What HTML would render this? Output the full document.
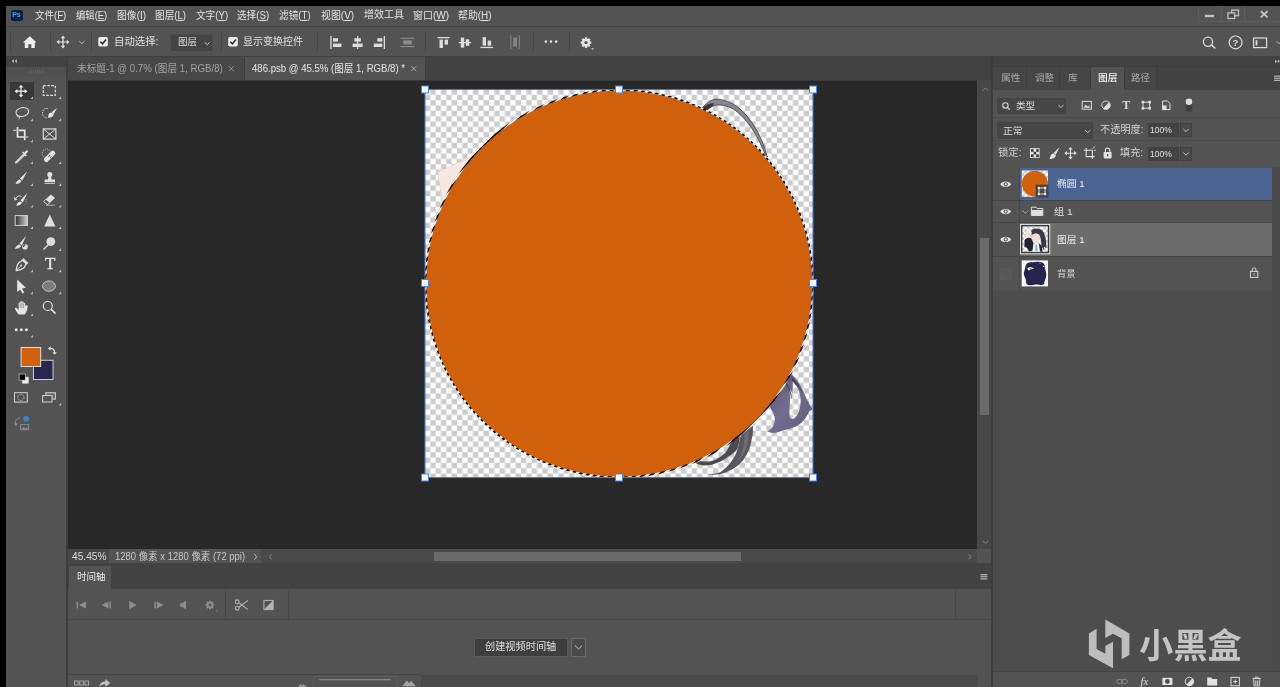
<!DOCTYPE html>
<html lang="zh-CN">
<head>
<meta charset="utf-8">
<title>Photoshop</title>
<style>
*{margin:0;padding:0;box-sizing:border-box}
html,body{width:1280px;height:687px;overflow:hidden;background:#000}
body{position:relative;font-family:"Liberation Sans","Noto Sans CJK SC",sans-serif;font-size:10.5px;color:#d6d6d6;line-height:1}
.abs{position:absolute}
.t{position:absolute;white-space:nowrap}
svg{position:absolute;overflow:visible}
u{text-decoration:underline;text-decoration-thickness:0.8px;text-underline-offset:1px}
/* ===== frames ===== */
#menubar{left:6px;top:6px;width:1274px;height:20px;background:#535353}
#menuline{left:6px;top:26px;width:1274px;height:1px;background:#444}
#optbar{left:6px;top:27px;width:1274px;height:29px;background:#535353}
#optline{left:6px;top:56px;width:1274px;height:1px;background:#3f3f3f}
#toolhead{left:6px;top:57px;width:60px;height:10px;background:#424242}
#toolgrip{left:6px;top:67px;width:60px;height:9px;background:#505050}
#tools{left:6px;top:76px;width:60px;height:611px;background:#535353}
#toolsep{left:66px;top:57px;width:2px;height:630px;background:#3d3d3d}
#tabbar{left:68px;top:57px;width:924px;height:23px;background:#424242}
#canvas{left:68px;top:80px;width:909px;height:469px;background:#282828;border-top:1px solid #363636}
#vscroll{left:977px;top:80px;width:14px;height:469px;background:#474747}
#vthumb{left:980px;top:238px;width:9px;height:177px;background:#6a6a6a}
#status{left:68px;top:549px;width:923px;height:14px;background:#4a4a4a}
#tlhead{left:68px;top:563px;width:923px;height:26px;background:#424242}
#tlctrl{left:68px;top:589px;width:923px;height:30px;background:#535353}
#tlbody{left:68px;top:619px;width:923px;height:56px;background:#535353;border-top:1px solid #474747}
#tlfoot{left:68px;top:675px;width:923px;height:12px;background:#535353}
#midsep{left:991px;top:57px;width:2px;height:630px;background:#3d3d3d}
#rhead{left:993px;top:57px;width:287px;height:10px;background:#424242}
#rtabs{left:993px;top:67px;width:287px;height:23px;background:#424242}
#rpanel{left:993px;top:90px;width:287px;height:77px;background:#535353}
#rlist{left:993px;top:167px;width:287px;height:505px;background:#4d4d4d}
#rfoot{left:993px;top:672px;width:287px;height:15px;background:#535353}
</style>
</head>
<body>
<div id="root" style="position:absolute;left:0;top:0;width:1280px;height:687px;will-change:transform">
<div class="abs" id="menubar"></div>
<div class="abs" id="menuline"></div>
<div class="abs" id="optbar"></div>
<div class="abs" id="optline"></div>
<div class="abs" id="toolhead"></div>
<div class="abs" id="toolgrip"></div>
<div class="abs" id="tools"></div>
<div class="abs" id="toolsep"></div>
<div class="abs" id="tabbar"></div>
<div class="abs" id="canvas"></div>
<div class="abs" id="vscroll"></div>
<div class="abs" id="vthumb"></div>
<div class="abs" id="status"></div>
<div class="abs" id="tlhead"></div>
<div class="abs" id="tlctrl"></div>
<div class="abs" id="tlbody"></div>
<div class="abs" id="tlfoot"></div>
<div class="abs" id="midsep"></div>
<div class="abs" id="rhead"></div>
<div class="abs" id="rtabs"></div>
<div class="abs" id="rpanel"></div>
<div class="abs" id="rlist"></div>
<div class="abs" id="rfoot"></div>
<!-- Ps app icon -->
<div class="abs" style="left:10.5px;top:10px;width:12px;height:11px;background:#0a2240;border-radius:2.2px"></div>
<span class="t" style="left:12.2px;top:11.3px;font-size:7px;line-height:8px;font-weight:bold;color:#31a8ff;letter-spacing:-0.2px">Ps</span>
<!-- window controls -->
<div class="abs" style="left:1198px;top:6px;width:82px;height:16px;border-left:1px solid #5e5e5e;border-bottom:1px solid #5e5e5e"></div>
<div class="abs" style="left:1221px;top:6px;width:1px;height:15px;background:#5e5e5e"></div>
<div class="abs" style="left:1244px;top:6px;width:1px;height:15px;background:#5e5e5e"></div>
<svg width="82" height="16" viewBox="1198 6 82 16" style="left:1198px;top:6px">
<rect x="1205" y="14.8" width="9" height="2.4" fill="#c4c4c4"/>
<rect x="1231.7" y="10.1" width="6.8" height="5.6" fill="none" stroke="#c0c0c0" stroke-width="1.3"/>
<rect x="1227.9" y="12.9" width="6.8" height="5.6" fill="#535353" stroke="#c0c0c0" stroke-width="1.3"/>
<rect x="1229.8" y="14.8" width="3" height="1.8" fill="#3c3c3c"/>
<path d="M1260.8 11.2 L1267.6 17.4 M1267.6 11.2 L1260.8 17.4" stroke="#c8c8c8" stroke-width="1.7" fill="none"/>
</svg>
<svg width="1274" height="29" viewBox="6 27 1274 29" style="left:6px;top:27px">
<!-- grip -->
<g fill="#474747"><rect x="10" y="32" width="1" height="20"/></g>
<!-- home -->
<path d="M29.8 36.3 L23 42.6 L24.8 42.6 L24.8 48 L28.3 48 L28.3 44.2 L31.3 44.2 L31.3 48 L34.8 48 L34.8 42.6 L36.6 42.6 Z" fill="#f0f0f0"/>
<!-- separators -->
<g fill="#464646"><rect x="50" y="31.5" width="1" height="20"/><rect x="91" y="31.5" width="1" height="20"/><rect x="221" y="31.5" width="1" height="20"/><rect x="317" y="31.5" width="1" height="20"/><rect x="425" y="31.5" width="1" height="20"/><rect x="533" y="31.5" width="1" height="20"/><rect x="569" y="31.5" width="1" height="20"/></g>
<!-- move tool -->
<g stroke="#e4e4e4" stroke-width="1.2" fill="#e4e4e4">
<path d="M63 37 V47 M58 42 H68" fill="none"/>
<path d="M63 35.6 L65.2 38.2 H60.8 Z M63 48.4 L65.2 45.8 H60.8 Z M56.6 42 L59.2 39.8 V44.2 Z M69.4 42 L66.8 39.8 V44.2 Z" stroke="none"/>
</g>
<path d="M79.3 41.3 L81.8 43.7 L84.3 41.3" stroke="#b8b8b8" stroke-width="1" fill="none"/>
<!-- checkbox 1 -->
<rect x="98.3" y="37" width="9.6" height="9.6" rx="1.8" fill="#ececec"/>
<path d="M100.4 41.8 L102.5 43.9 L106 39.6" stroke="#2a2a2a" stroke-width="1.6" fill="none"/>
<!-- dropdown -->
<rect x="170.7" y="34.5" width="41.8" height="16.5" rx="1" fill="#444"/>
<path d="M204.6 42.2 L207.2 44.7 L209.8 42.2" stroke="#c8c8c8" stroke-width="1" fill="none"/>
<!-- checkbox 2 -->
<rect x="228.2" y="37" width="9.6" height="9.6" rx="1.8" fill="#ececec"/>
<path d="M230.3 41.8 L232.4 43.9 L235.9 39.6" stroke="#2a2a2a" stroke-width="1.6" fill="none"/>
<!-- align left -->
<g fill="#dcdcdc">
<rect x="330.3" y="36" width="1.3" height="13"/><rect x="333" y="38.2" width="5" height="3.4"/><rect x="333" y="43.6" width="8.5" height="3.4"/>
<!-- align center h -->
<rect x="357" y="36" width="1.2" height="13"/><rect x="354.3" y="38.2" width="6.6" height="3.4"/><rect x="352.6" y="43.6" width="10" height="3.4"/>
<!-- align right -->
<rect x="383.7" y="36" width="1.3" height="13"/><rect x="377.3" y="38.2" width="5" height="3.4"/><rect x="373.8" y="43.6" width="8.5" height="3.4"/>
</g>
<!-- distribute (dim) -->
<g fill="#8c8c8c"><rect x="400.5" y="37.7" width="14" height="1.1"/><rect x="400.5" y="46" width="14" height="1.1"/><rect x="403.2" y="40.4" width="8.6" height="4"/></g>
<!-- align top -->
<g fill="#dcdcdc">
<rect x="437.5" y="37" width="12" height="1.3"/><rect x="439.5" y="39.6" width="3.4" height="8.4"/><rect x="444.6" y="39.6" width="3.4" height="5"/>
<!-- align middle v -->
<rect x="458.7" y="42" width="12.4" height="1.2"/><rect x="460.8" y="37.6" width="3.4" height="10"/><rect x="465.8" y="39.3" width="3.4" height="6.6"/>
<!-- align bottom -->
<rect x="480.5" y="46.8" width="12.5" height="1.3"/><rect x="482.6" y="37.2" width="3.4" height="8.4"/><rect x="487.7" y="40.6" width="3.4" height="5"/>
</g>
<!-- distribute v (dim) -->
<g fill="#858585"><rect x="510.3" y="35.4" width="1.1" height="13.4"/><rect x="518.7" y="35.4" width="1.1" height="13.4"/><rect x="513.2" y="37.6" width="3.8" height="9"/></g>
<!-- dots -->
<g fill="#dedede"><circle cx="545.9" cy="41.6" r="1.3"/><circle cx="551" cy="41.6" r="1.3"/><circle cx="556.1" cy="41.6" r="1.3"/></g>
<!-- gear -->
<g transform="translate(586 42.6)">
<g fill="#e6e6e6">
<circle r="3.9"/>
<g id="tooth"><rect x="-1.15" y="-5.3" width="2.3" height="10.6"/></g>
<rect x="-1.15" y="-5.3" width="2.3" height="10.6" transform="rotate(45)"/>
<rect x="-1.15" y="-5.3" width="2.3" height="10.6" transform="rotate(90)"/>
<rect x="-1.15" y="-5.3" width="2.3" height="10.6" transform="rotate(135)"/>
</g>
<circle r="1.7" fill="#535353"/>
</g>
<path d="M591.2 48.3 H594 L592.6 50 Z" fill="#d0d0d0"/>
<!-- right icons -->
<circle cx="1208" cy="41.7" r="4.6" fill="none" stroke="#dcdcdc" stroke-width="1.3"/>
<path d="M1211.4 45 L1214.8 48" stroke="#dcdcdc" stroke-width="1.6" stroke-linecap="round"/>
<circle cx="1235.6" cy="42.4" r="6.4" fill="none" stroke="#dcdcdc" stroke-width="1.2"/>
<rect x="1253.6" y="38" width="13" height="9.6" fill="none" stroke="#dcdcdc" stroke-width="1.2"/>
<rect x="1255.6" y="40.2" width="1.8" height="5.2" fill="#dcdcdc"/>
<path d="M1276.5 41.3 L1279 43.6 L1281.5 41.3" stroke="#b8b8b8" stroke-width="1" fill="none"/>
</svg>
<span class="t" style="left:1232.6px;top:37.2px;font-size:9.5px;line-height:11px;font-weight:bold;color:#dcdcdc">?</span>
<!-- doc tabs -->
<div class="abs" style="left:68px;top:57px;width:176px;height:23px;background:#474747"></div>
<div class="abs" style="left:244px;top:57px;width:181px;height:23px;background:#535353"></div>
<div class="abs" style="left:243.5px;top:57px;width:1px;height:23px;background:#3c3c3c"></div>
<div class="abs" style="left:425px;top:57px;width:1px;height:23px;background:#3c3c3c"></div>
<svg width="924" height="24" viewBox="68 57 924 24" style="left:68px;top:57px">
<path d="M228.8 66.2 L233.8 71.2 M233.8 66.2 L228.8 71.2" stroke="#9a9a9a" stroke-width="0.9" fill="none"/>
<path d="M411.3 66.2 L416.3 71.2 M416.3 66.2 L411.3 71.2" stroke="#b4b4b4" stroke-width="0.9" fill="none"/>
</svg>
<!-- tool panel header chevrons -->
<svg width="60" height="10" viewBox="6 57 60 10" style="left:6px;top:57px">
<path d="M13.8 59.2 V63 L11.8 61.1 Z M16.8 59.2 V63 L14.8 61.1 Z" fill="#cfcfcf"/>
</svg>
<svg width="60" height="9" viewBox="6 67 60 9" style="left:6px;top:67px">
<g fill="#616161"><rect x="29" y="70" width="1" height="3.5"/><rect x="31" y="70" width="1" height="3.5"/><rect x="33" y="70" width="1" height="3.5"/><rect x="35" y="70" width="1" height="3.5"/><rect x="37" y="70" width="1" height="3.5"/><rect x="39" y="70" width="1" height="3.5"/><rect x="41" y="70" width="1" height="3.5"/><rect x="43" y="70" width="1" height="3.5"/></g>
</svg>
<div class="abs" style="left:9.6px;top:81.6px;width:24.4px;height:18.3px;background:#383838"></div>
<svg width="60" height="611" viewBox="6 76 60 611" style="left:6px;top:76px">
<defs>
<linearGradient id="gr1" x1="0" y1="0" x2="1" y2="0"><stop offset="0" stop-color="#2e2e2e"/><stop offset="1" stop-color="#d0d0d0"/></linearGradient>
<path id="tri" d="M0 2.6 H2.6 V0 Z" fill="#bdbdbd"/>
</defs>
<!-- corner triangles -->
<use href="#tri" x="30.4" y="96.4"/><use href="#tri" x="58.5" y="96.4"/>
<use href="#tri" x="30.4" y="118.6"/><use href="#tri" x="58.5" y="118.6"/>
<use href="#tri" x="30.4" y="139.6"/>
<use href="#tri" x="30.4" y="161.3"/><use href="#tri" x="58.5" y="161.3"/>
<use href="#tri" x="30.4" y="183.3"/><use href="#tri" x="58.5" y="183.3"/>
<use href="#tri" x="30.4" y="205"/><use href="#tri" x="58.5" y="205"/>
<use href="#tri" x="30.4" y="226.3"/><use href="#tri" x="58.5" y="226.3"/>
<use href="#tri" x="58.5" y="248.3"/>
<use href="#tri" x="30.4" y="269.6"/><use href="#tri" x="58.5" y="269.6"/>
<use href="#tri" x="30.4" y="291.6"/><use href="#tri" x="58.5" y="291.6"/>
<use href="#tri" x="30.4" y="313.4"/>
<use href="#tri" x="30.4" y="335"/>
<use href="#tri" x="58.5" y="403"/>
<!-- move -->
<g fill="#f0f0f0"><path d="M21 86.6 V95.8 M16.4 91.2 H25.6" stroke="#f0f0f0" stroke-width="1.2"/>
<path d="M21 84.8 L23.3 87.6 H18.7 Z M21 97.6 L23.3 94.8 H18.7 Z M14.6 91.2 L17.4 88.9 V93.5 Z M27.4 91.2 L24.6 88.9 V93.5 Z"/></g>
<!-- marquee -->
<rect x="43.3" y="85.7" width="12" height="9.6" fill="none" stroke="#e0e0e0" stroke-width="1.2" stroke-dasharray="2.6 1.4"/>
<!-- lasso -->
<ellipse cx="22.3" cy="112" rx="6.4" ry="4.4" fill="none" stroke="#dadada" stroke-width="1.1" transform="rotate(-12 22.3 112)"/>
<path d="M17.6 114.6 C16.6 116 17.6 117.4 19 116.6 C19.8 117.4 19.4 118.6 18.8 119.4" fill="none" stroke="#dadada" stroke-width="1"/>
<!-- quick select -->
<path d="M47.6 108.4 C43.6 107.8 42.2 111 42.6 114 C43 117 45.4 118.6 47.6 117.6" fill="none" stroke="#d8d8d8" stroke-width="1" stroke-dasharray="1.3 1"/>
<path d="M56.9 107.9 L51.6 112.2 L53.6 114.2 Z" fill="#ececec"/>
<path d="M51.2 112.4 C48.8 112.8 48.2 115 48 117.8 C51.4 117.8 53.6 116.6 53.8 114.6 Z" fill="#ececec"/>
<!-- crop -->
<path d="M17.5 127 V137 H24.4 M18.9 130.3 H24.7 V140.2" fill="none" stroke="#e8e8e8" stroke-width="1.7"/><path d="M25.6 137 H28.5 M13.1 130.3 H16.4" stroke="#dcdcdc" stroke-width="1.1"/>
<!-- frame -->
<rect x="43.3" y="128.9" width="12.6" height="10.2" fill="none" stroke="#dcdcdc" stroke-width="1.2"/>
<path d="M43.3 128.9 L55.9 139.1 M55.9 128.9 L43.3 139.1" stroke="#dcdcdc" stroke-width="1"/>
<!-- eyedropper -->
<path d="M23.8 154 L16.4 161.4 C15.6 162.2 15 162.8 15.6 163 C16.4 163.2 17 162.4 17.6 161.8 L24.8 154.8" fill="none" stroke="#dcdcdc" stroke-width="1.1"/>
<path d="M22 152.6 L25.8 156.4 L26.8 155.4 L25.6 154.2 L27.8 152 C28.6 151.2 27.2 149.6 26.2 150.6 L24.2 152.8 L23 151.6 Z" fill="#e6e6e6"/>
<!-- healing -->
<circle cx="46.6" cy="153.4" r="4.4" fill="none" stroke="#cfcfcf" stroke-width="0.9" stroke-dasharray="1.3 1"/>
<path d="M46.4 159.6 L52.8 153.2" stroke="#e4e4e4" stroke-width="5" stroke-linecap="round"/>
<g fill="#535353"><circle cx="48.8" cy="156.2" r="0.55"/><circle cx="50.4" cy="157.6" r="0.55"/><circle cx="49.6" cy="155.4" r="0.55"/><circle cx="51.2" cy="156.8" r="0.55"/></g>
<!-- brush -->
<path d="M27.2 171.5 L19.9 178.5 L22.2 180.6 Z" fill="#e6e6e6"/>
<path d="M19.8 179.6 C17.6 179.8 16.4 181.6 15.6 184 C18.4 184 20.6 183 21.4 181 Z" fill="#e6e6e6"/>
<!-- stamp -->
<circle cx="49.8" cy="174.6" r="2.5" fill="#e2e2e2"/>
<path d="M48.6 176 H51 L51.6 179.4 H55 V182 H44.6 V179.4 H48 Z" fill="#e2e2e2"/>
<rect x="44.6" y="182.8" width="10.4" height="1.1" fill="#cfcfcf"/>
<!-- history brush -->
<path d="M27.4 193.1 L20.5 200.3 L22.8 202.4 Z" fill="#e4e4e4"/>
<path d="M20.4 201.4 C18.2 201.6 17 203.4 16.2 205.8 C19 205.8 21.2 204.8 22 202.8 Z" fill="#e4e4e4"/>
<path d="M15.8 198.4 C17 196 19.6 195.4 21.6 196.4" fill="none" stroke="#d6d6d6" stroke-width="1"/>
<path d="M14 196.8 L17.6 199.6 L14.4 200.4 Z" fill="#d6d6d6"/>
<path d="M26 199 C27 201.4 26.4 203.4 24.6 204.6" fill="none" stroke="#a8a8a8" stroke-width="0.8" stroke-dasharray="1 0.9"/>
<!-- eraser -->
<path d="M50.8 194.4 L55 198 L47.6 205 L43.4 201.6 Z" fill="#e2e2e2"/>
<path d="M45.8 199.2 L43.6 201.4 L47.4 204.6 L49.6 202.6 Z" fill="#535353" stroke="#e2e2e2" stroke-width="0.8"/>
<path d="M46 205.2 H55" stroke="#bdbdbd" stroke-width="0.9"/>
<!-- gradient -->
<rect x="15.2" y="215.6" width="12.2" height="9.8" fill="url(#gr1)" stroke="#d4d4d4" stroke-width="1"/>
<!-- sharpen triangle -->
<path d="M49.8 214.6 L55.4 226.4 H44.2 Z" fill="#e0e0e0"/>
<!-- mixer -->
<path d="M26.2 235.7 L19.5 243.5 L21.8 245.4 Z" fill="#e2e2e2"/>
<path d="M19.6 244.4 C17.4 244.8 15.8 246.4 14.8 248.8 C17.6 248.8 19.8 248 21 246 Z" fill="#e2e2e2"/>
<circle cx="25" cy="246.7" r="2.8" fill="#e2e2e2"/>
<path d="M23.2 247.6 A2 2 0 0 1 26 244.8 Z" fill="#535353"/>
<!-- dodge -->
<circle cx="50.8" cy="241.6" r="4.4" fill="#dedede"/>
<path d="M48 245 L43.4 249.4" stroke="#dedede" stroke-width="1.4"/>
<!-- pen -->
<path d="M23.4 259 L27.6 263 L25.2 265.4 C24.8 268 22 270 16.2 270.6 C16.6 265 18.8 262 21.2 261.4 Z" fill="none" stroke="#e0e0e0" stroke-width="1.2"/>
<path d="M16.6 270.2 L20.8 266" stroke="#e0e0e0" stroke-width="0.9"/><circle cx="21.2" cy="265.6" r="1" fill="#e0e0e0"/>
<path d="M22.4 259.8 L26.8 264" stroke="#e0e0e0" stroke-width="1.8"/>
<!-- ellipse shape -->
<ellipse cx="49" cy="286.1" rx="6.4" ry="5.2" fill="#7c7c7c" stroke="#c4c4c4" stroke-width="1"/>
<!-- path select arrow -->
<path d="M17.2 279.6 V291.9 L20.2 289.4 L22.4 293.6 L24.2 292.6 L22 288.6 L25.9 287.8 Z" fill="#e6e6e6"/>
<!-- hand -->
<path d="M18.6 314.6 C17 312.6 15.6 310 14.8 308.4 C15.6 307.4 16.8 307.8 17.6 309 L18.6 310.4 V303.4 C18.6 302.2 20.2 302.2 20.2 303.4 V301.8 C20.2 300.6 21.9 300.6 21.9 301.8 V302.4 C21.9 301.2 23.6 301.2 23.6 302.4 V303.6 C23.6 302.6 25.2 302.6 25.2 303.6 V306 C26.4 304.8 27.8 305.2 27.6 306.4 C27.4 309.6 26.4 312.6 24.6 314.6 Z" fill="#e4e4e4"/>
<g stroke="#535353" stroke-width="0.5"><path d="M20.2 303.4 V308 M21.9 302.4 V308 M23.6 303.6 V308"/></g>
<!-- zoom -->
<circle cx="47.8" cy="306" r="4.5" fill="none" stroke="#e0e0e0" stroke-width="1.2"/>
<path d="M51.2 309.4 L55.6 313.6" stroke="#e0e0e0" stroke-width="1.5"/>
<!-- dots -->
<g fill="#e4e4e4"><circle cx="16.2" cy="329.8" r="1.5"/><circle cx="21.3" cy="329.8" r="1.5"/><circle cx="26.4" cy="329.8" r="1.5"/></g>
<!-- swatches -->
<rect x="33.4" y="360.3" width="19.6" height="19.2" fill="#27264f" stroke="#cfcfcf" stroke-width="1"/>
<rect x="21.1" y="347.5" width="19.6" height="19" fill="#d1610c" stroke="#e0e0e0" stroke-width="1"/>
<path d="M49.4 348.4 C52.6 348 54.6 349.8 54.6 352.4" fill="none" stroke="#e0e0e0" stroke-width="1.3"/>
<path d="M48 348.4 L50.6 346.2 V350.6 Z M54.6 354.8 L52.4 352.2 H56.8 Z" fill="#e0e0e0"/>
<rect x="22.3" y="377.2" width="6" height="6" fill="#f2f2f2" stroke="#d0d0d0" stroke-width="0.7"/>
<rect x="19.1" y="374" width="6.2" height="6.2" fill="#000" stroke="#d0d0d0" stroke-width="0.7"/>
<!-- quick mask -->
<rect x="14.5" y="392.7" width="12.8" height="9.4" fill="none" stroke="#d4d4d4" stroke-width="1"/>
<circle cx="20.9" cy="397.4" r="3.1" fill="none" stroke="#cfcfcf" stroke-width="0.8" stroke-dasharray="1.4 0.9"/>
<!-- screen mode -->
<rect x="45.8" y="392.7" width="9.6" height="6.4" fill="#6a6a6a" stroke="#d4d4d4" stroke-width="1"/>
<rect x="42.6" y="395.6" width="9.4" height="6.4" fill="#535353" stroke="#d4d4d4" stroke-width="1"/>
<!-- last -->
<path d="M19.8 418.2 C16.4 417.6 14.6 421 15.8 424.4" fill="none" stroke="#8f8f8f" stroke-width="1"/>
<path d="M14.2 423.4 L16.2 426.2 L17.6 423.2 Z" fill="#8f8f8f"/>
<rect x="20.4" y="424.6" width="8.2" height="5.2" fill="none" stroke="#8f8f8f" stroke-width="0.9"/>
<path d="M21 429.4 L23.4 427 L25 428.4 L26.6 427.4 L28 429.4 Z" fill="#8f8f8f"/>
<circle cx="26.1" cy="418.8" r="2.9" fill="#3d82c6"/>
</svg>
<span class="t" style="left:45px;top:254.3px;font-family:'Liberation Serif',serif;font-size:17px;line-height:19px;color:#e4e4e4;-webkit-text-stroke:0.35px #e4e4e4">T</span>
<svg id="cv" width="1280" height="687" viewBox="0 0 1280 687" style="left:0;top:0">
<defs>
<pattern id="chk" x="425" y="89.5" width="10.6667" height="10.6667" patternUnits="userSpaceOnUse">
<rect width="10.6667" height="10.6667" fill="#fff"/>
<rect x="5.3333" y="0" width="5.3333" height="5.3333" fill="#ccc"/>
<rect x="0" y="5.3333" width="5.3333" height="5.3333" fill="#ccc"/>
</pattern>
<linearGradient id="hp" x1="0" y1="0" x2="1" y2="1">
<stop offset="0" stop-color="#5a5470"/><stop offset="0.5" stop-color="#746d90"/><stop offset="1" stop-color="#5d5776"/>
</linearGradient>
<clipPath id="imgclip"><rect x="425" y="89.5" width="388" height="388"/></clipPath>
<pattern id="ants" width="5.657" height="5.657" patternUnits="userSpaceOnUse" patternTransform="rotate(45) translate(3.0 0)">
<rect width="5.657" height="5.657" fill="#fff"/><rect width="2.9" height="5.657" fill="#000"/>
</pattern>
</defs>
<rect x="425" y="89.5" width="388" height="388" fill="url(#chk)"/>
<g clip-path="url(#imgclip)">
<!-- pale skin triangle -->
<path d="M437.5 172.2 L474 155.3 L480 160 L450 215 L442 200 Z" fill="#f9e7e2" stroke="#d9b9b3" stroke-width="0.4"/>
<!-- upper hair strand -->
<path d="M702.5 107.8 C707 102.5 712 99 717 99.2 C725 99.6 731.5 102.6 737 106.6 C745 112.6 750.5 120.5 753.5 125 C760 135 764.5 146 767.4 157 L766.2 157.3 C762.5 147 757.5 136.5 751 127.2 C745.5 119.5 739.5 113 733.5 109.2 C727 105.2 719 104 714 105.6 C710.5 106.8 707.5 109.6 705.8 111.6 Z" fill="#8b878f" stroke="#2e2c33" stroke-width="0.7"/>
<path d="M702.5 107.8 C706 104.5 710 102.8 714 103.2 L712.5 106.4 C710 107.5 707.8 109.4 705.8 111.6 Z" fill="#3a383f"/>
<!-- purple hair lower right -->
<path d="M791 374 C796 378 800 384 803 390.5 C805.5 396.5 808 402.5 812.6 409.6 C810.4 410.4 809 411.4 808.4 412.6 C806 418.6 802 423.4 797 426 C791 429 785 429.6 780 431.6 C775.5 433.4 771 433.2 767 431.6 C770.4 430 772.8 427.4 774 424 C775.4 420 775 416 773 412.5 C771.5 410 770.5 408.5 770 406.5 Z" fill="url(#hp)"/>
<path d="M792.6 381 C797 385.6 800.2 392 800.6 399 C801 406 799.4 413.4 795 417.8 C792.6 420 790 419 789.6 416 C789 411 790 404.6 790 399.4 C790 395 789.4 391 788.8 388.6 C790.4 389.4 791.6 391.6 792.4 394 C792.8 390 792.8 385 792.6 381 Z" fill="url(#chk)"/>
<path d="M786.4 382.4 C789.4 386.6 791.6 392.6 792 399.8 C790.4 393.8 788.4 388 785.4 384 Z" fill="#4a4562"/>
<path d="M791.5 376 C796.5 381 800.5 387 803.4 394.4 C800 389.4 796 384.4 791.6 380.8 Z" fill="#4a4560"/>
<!-- grey hair bottom -->
<path d="M753.2 425.6 C753 433 752 440 750.2 446.2 C748 453 745.4 457.4 742.4 461 C738.6 465.6 734 468.6 729.3 470.7 C725 472.8 720.6 474.2 716.2 474.6 C713 475 710 474.8 707.5 474.1 C712 474 716 473.4 719.7 472.4 C724.4 469.4 728 465.8 731 461.9 C734.4 457.6 736.6 453.2 737.6 448.8 C738.6 445 739.6 441 740.2 437.5 L742.4 433.1 Z" fill="#58575d"/>
<path d="M748.6 430.2 C749 438 747.6 446 744.4 452.6 C742 457.6 738.4 462.2 734.4 465.6 C738.6 460.4 741.6 454.6 743 448.6 C744.2 443.4 744.6 438.4 744.4 434 Z" fill="#6d6c72"/>
<path d="M739.8 436.6 C739.6 440.6 738.8 444.6 737.6 448 C735.6 451.4 732.4 454.4 728.4 456.7 C724.6 459.4 720.4 461.6 716.2 463.2 C711.8 464.8 707.4 465.6 703.1 465.4 C700.2 465.2 697.4 464.2 695.2 462.8 C697.2 462.6 699 462 700.5 461 C704.4 461.8 708.2 461.8 711.8 461 C716.8 459.4 721 456.6 724.9 453.2 C727.4 450 729.4 446.4 731 442.3 Z" fill="#4c4b51"/>
<path d="M752.4 426.6 C753.6 430 753.4 434 752.4 437.6 C752.6 433.6 752.4 430 751.6 427.4 Z" fill="#6a6488"/>
</g>
<!-- ellipse shape -->
<circle cx="619.2" cy="283.6" r="193.5" fill="#d0600b"/>
<!-- marching ants -->
<circle cx="619.2" cy="283.6" r="193.8" fill="none" stroke="url(#ants)" stroke-width="1.5"/>
<!-- transform box -->
<rect x="425" y="89.5" width="388" height="388" fill="none" stroke="#3f7be6" stroke-width="1.1"/>
<g fill="#f4f6fb" stroke="#4a82e8" stroke-width="1">
<rect x="421.5" y="86" width="7" height="7"/><rect x="615.5" y="86" width="7" height="7"/><rect x="809.5" y="86" width="7" height="7"/>
<rect x="421.5" y="279.5" width="7" height="7"/><rect x="809.5" y="279.5" width="7" height="7"/>
<rect x="421.5" y="474" width="7" height="7"/><rect x="615.5" y="474" width="7" height="7"/><rect x="809.5" y="474" width="7" height="7"/>
</g>
</svg>
<div class="abs" style="left:68px;top:549px;width:41px;height:14px;background:#474747"></div>
<div class="abs" style="left:109px;top:549px;width:152px;height:14px;background:#535353"></div>
<div class="abs" style="left:434px;top:551.5px;width:307px;height:9.5px;background:#6a6a6a"></div>
<div class="abs" style="left:977px;top:549px;width:14px;height:14px;background:#535353"></div>
<svg width="923" height="13" viewBox="68 550 923 13" style="left:68px;top:550px">
<path d="M254.3 553.8 L256.6 556.8 L254.3 559.8" stroke="#c4c4c4" stroke-width="0.9" fill="none"/>
<path d="M271.6 554.3 L269.6 556.8 L271.6 559.3" stroke="#8a8a8a" stroke-width="0.9" fill="none"/>
<path d="M968.6 554.3 L970.8 556.8 L968.6 559.3" stroke="#8a8a8a" stroke-width="0.9" fill="none"/>
</svg>
<!-- vscroll arrows -->
<svg width="14" height="469" viewBox="977 81 14 469" style="left:977px;top:81px">
<path d="M982.8 90.6 L985.5 87.9 L988.2 90.6" stroke="#8a8a8a" stroke-width="0.9" fill="none"/>
<path d="M982.8 540.9 L985.5 543.6 L988.2 540.9" stroke="#8a8a8a" stroke-width="0.9" fill="none"/>
</svg>
<div class="abs" style="left:68.5px;top:566px;width:42.5px;height:23px;background:#535353"></div>
<div class="abs" style="left:225px;top:590px;width:1px;height:29px;background:#474747"></div>
<div class="abs" style="left:288px;top:590px;width:1px;height:29px;background:#474747"></div>
<div class="abs" style="left:955px;top:590px;width:1px;height:29px;background:#474747"></div>
<div class="abs" style="left:68px;top:674px;width:353px;height:1px;background:#464646"></div>
<div class="abs" style="left:421px;top:675px;width:557px;height:12px;background:#4a4a4a"></div>
<!-- create video timeline button -->
<div class="abs" style="left:473.5px;top:637.5px;width:94px;height:19.5px;background:#3e3e3e;border:1px solid #5a5a5a;border-radius:1px"></div>
<div class="abs" style="left:571px;top:637.5px;width:15px;height:19.5px;background:#4a4a4a;border:1px solid #6a6a6a;border-radius:1px"></div>
<svg width="923" height="124" viewBox="68 563 923 124" style="left:68px;top:563px">
<path d="M575 645.5 L578.6 649 L582.2 645.5" stroke="#c8c8c8" stroke-width="1" fill="none"/>
<!-- panel menu -->
<g fill="#c0c0c0"><rect x="980.4" y="574.2" width="7" height="1.1"/><rect x="980.4" y="576.3" width="7" height="1.1"/><rect x="980.4" y="578.4" width="7" height="1.1"/></g>
<!-- transport -->
<g fill="#8f8f8f">
<rect x="76.6" y="601.6" width="1.4" height="6.8"/><path d="M85.8 601.6 V608.4 L79 605 Z"/>
<path d="M108.4 601.6 V608.4 L101.6 605 Z"/><rect x="109.4" y="601.6" width="1.5" height="6.8"/>
<path d="M129.2 600.8 V609.2 L136.6 605 Z"/>
<rect x="154.3" y="601.6" width="1.5" height="6.8"/><path d="M156.8 601.6 V608.4 L163.6 605 Z"/>
<path d="M186 600.6 V609.4 L182.4 606.8 H180.2 V603.2 H182.4 Z"/>
</g>
<g transform="translate(210 605)">
<g fill="#8f8f8f"><circle r="3.1"/><rect x="-0.95" y="-4.3" width="1.9" height="8.6"/><rect x="-0.95" y="-4.3" width="1.9" height="8.6" transform="rotate(45)"/><rect x="-0.95" y="-4.3" width="1.9" height="8.6" transform="rotate(90)"/><rect x="-0.95" y="-4.3" width="1.9" height="8.6" transform="rotate(135)"/></g>
<circle r="1.4" fill="#535353"/>
</g>
<path d="M215.6 610.6 H218 L216.8 612 Z" fill="#7a7a7a"/>
<!-- scissors -->
<g stroke="#b4b4b4" stroke-width="1.1" fill="none">
<circle cx="237.2" cy="601.8" r="1.9"/><circle cx="237.2" cy="608.2" r="1.9"/>
<path d="M238.8 602.8 L248 609.6 M238.8 607.2 L248 600.4"/>
</g>
<!-- transition -->
<rect x="263.9" y="600.4" width="9.2" height="9.2" fill="none" stroke="#b4b4b4" stroke-width="1"/>
<path d="M273.1 600.4 V609.6 H263.9 Z" fill="#b4b4b4"/>
<!-- footer -->
<g fill="none" stroke="#b0b0b0" stroke-width="0.9"><rect x="74.5" y="681" width="3.6" height="4"/><rect x="79.7" y="681" width="3.6" height="4"/><rect x="84.9" y="681" width="3.6" height="4"/></g>
<path d="M99.3 687 C99.6 683.5 102 681.6 105.4 681.6 V679 L110.3 683 L105.4 687 V684.2 C102.6 684.2 100.6 685 99.3 687 Z" fill="#c4c4c4"/>
<path d="M297.8 687 L300.5 683.8 L302 685.2 L303.5 684 L306.6 687 Z" fill="#949494"/>
<rect x="319.4" y="679" width="71" height="1.4" fill="#858585"/>
<path d="M313 687 V679.5 Q313 676.4 316 676.4 H394 Q397 676.4 397 679.5 V687" fill="none" stroke="#5e5e5e" stroke-width="0.8"/>
<path d="M402.4 686.2 L406.8 680.6 L409 683 L411.2 681 L415.8 686.2 Z" fill="#a6a6a6"/>
</svg>
<!-- right panel tabs -->
<div class="abs" style="left:993px;top:67px;width:163px;height:23px;background:#464646"></div>
<div class="abs" style="left:993px;top:66px;width:287px;height:1px;background:#3c3c3c"></div>
<div class="abs" style="left:1090.5px;top:67px;width:33px;height:23px;background:#535353"></div>
<div class="abs" style="left:1026px;top:67px;width:1px;height:23px;background:#3e3e3e"></div>
<div class="abs" style="left:1059px;top:67px;width:1px;height:23px;background:#3e3e3e"></div>
<div class="abs" style="left:1090px;top:67px;width:1px;height:23px;background:#3e3e3e"></div>
<div class="abs" style="left:1123.5px;top:67px;width:1px;height:23px;background:#3e3e3e"></div>
<div class="abs" style="left:1156px;top:67px;width:1px;height:23px;background:#3e3e3e"></div>
<!-- filter / blend fields -->
<div class="abs" style="left:997px;top:97.5px;width:69px;height:16.5px;background:#464646;border:1px solid #434343;border-radius:1.5px"></div>
<div class="abs" style="left:997px;top:122px;width:96px;height:16.5px;background:#464646;border:1px solid #434343;border-radius:1.5px"></div>
<div class="abs" style="left:1148px;top:123px;width:31px;height:14px;background:#434343;border:1px solid #404040"></div>
<div class="abs" style="left:1180px;top:123px;width:12px;height:14px;background:#4a4a4a;border:1px solid #404040"></div>
<div class="abs" style="left:1148px;top:147px;width:31px;height:13.5px;background:#434343;border:1px solid #404040"></div>
<div class="abs" style="left:1180px;top:147px;width:12px;height:13.5px;background:#4a4a4a;border:1px solid #404040"></div>
<div class="abs" style="left:993px;top:116.5px;width:287px;height:1px;background:#4b4b4b"></div>
<div class="abs" style="left:993px;top:140px;width:287px;height:1px;background:#4b4b4b"></div>
<!-- layer rows -->
<div class="abs" style="left:993px;top:167px;width:287px;height:123.5px;background:#535353"></div>
<div class="abs" style="left:1019px;top:167.5px;width:253px;height:32.5px;background:#4b6494"></div>
<div class="abs" style="left:1019px;top:222px;width:253px;height:34px;background:#6c6c6c"></div>
<div class="abs" style="left:1272px;top:167px;width:8px;height:505px;background:#4a4a4a"></div>
<div class="abs" style="left:993px;top:200px;width:279px;height:1px;background:#474747"></div>
<div class="abs" style="left:993px;top:221.5px;width:279px;height:1px;background:#474747"></div>
<div class="abs" style="left:993px;top:255.5px;width:279px;height:1px;background:#474747"></div>
<div class="abs" style="left:993px;top:290px;width:279px;height:1px;background:#4f4f4f"></div>
<div class="abs" style="left:1018.5px;top:167px;width:1px;height:123px;background:#474747"></div>
<div class="abs" style="left:993px;top:671px;width:287px;height:1px;background:#444"></div>
<svg width="287" height="630" viewBox="993 57 287 630" style="left:993px;top:57px">
<defs>
<pattern id="chk2" x="1021.7" y="170.5" width="5.34" height="5.34" patternUnits="userSpaceOnUse"><rect width="5.34" height="5.34" fill="#fff"/><rect x="2.67" width="2.67" height="2.67" fill="#ccc"/><rect y="2.67" width="2.67" height="2.67" fill="#ccc"/></pattern>
<g id="eye"><path d="M-5.4 0 C-3.4 -3.6 3.4 -3.6 5.4 0 C3.4 3.6 -3.4 3.6 -5.4 0 Z" fill="#e8e8e8"/><circle r="2.1" fill="#535353"/><circle r="1.1" fill="#e8e8e8"/></g>
<clipPath id="th1"><rect x="1021.7" y="170.5" width="26.3" height="26.3"/></clipPath>
</defs>
<!-- collapse chevrons + menu -->
<path d="M1275 59.4 L1276.9 61.3 L1275 63.2 Z M1277.8 59.4 L1279.7 61.3 L1277.8 63.2 Z" fill="#c8c8c8"/>
<g fill="#c0c0c0"><rect x="1274" y="75.6" width="6" height="1.1"/><rect x="1274" y="77.7" width="6" height="1.1"/><rect x="1274" y="79.8" width="6" height="1.1"/></g>
<!-- search icon -->
<circle cx="1005.4" cy="105.4" r="2.7" fill="none" stroke="#d8d8d8" stroke-width="1.1"/><path d="M1007.4 107.4 L1009.8 109.8" stroke="#d8d8d8" stroke-width="1.2"/>
<path d="M1058.4 105 L1061 107.5 L1063.6 105" stroke="#c4c4c4" stroke-width="1" fill="none"/>
<!-- filter icons -->
<rect x="1082.2" y="101.4" width="9.2" height="7.8" fill="none" stroke="#dcdcdc" stroke-width="1"/>
<path d="M1083.4 107.8 L1085.8 104.6 L1087.4 106.4 L1088.6 105.4 L1090.4 107.8 Z" fill="#dcdcdc"/>
<circle cx="1106" cy="105.2" r="4.2" fill="none" stroke="#dcdcdc" stroke-width="1"/><path d="M1103 108.2 A4.2 4.2 0 0 0 1109 102.2 Z" fill="#dcdcdc"/>
<rect x="1143" y="102.2" width="6.6" height="6" fill="none" stroke="#dcdcdc" stroke-width="1"/>
<g fill="#dcdcdc"><rect x="1141.6" y="100.8" width="2.6" height="2.6"/><rect x="1148.4" y="100.8" width="2.6" height="2.6"/><rect x="1141.6" y="107" width="2.6" height="2.6"/><rect x="1148.4" y="107" width="2.6" height="2.6"/></g>
<path d="M1162.6 101 H1167.4 L1170 103.6 V109.6 H1162.6 Z" fill="none" stroke="#dcdcdc" stroke-width="1"/>
<rect x="1162.2" y="105.4" width="4.4" height="4.6" fill="#dcdcdc"/>
<rect x="1185.6" y="98.4" width="6.8" height="13.6" rx="3.4" fill="#3f3f3f"/><circle cx="1189" cy="101.8" r="3.3" fill="#dedede"/>
<!-- blend -->
<path d="M1085 130 L1087.7 132.6 L1090.4 130" stroke="#c4c4c4" stroke-width="1" fill="none"/>
<path d="M1183.4 129 L1186 131.6 L1188.6 129" stroke="#c4c4c4" stroke-width="1" fill="none"/>
<path d="M1183.4 152.6 L1186 155.2 L1188.6 152.6" stroke="#c4c4c4" stroke-width="1" fill="none"/>
<!-- lock icons -->
<rect x="1030" y="148.2" width="9.6" height="9.6" fill="#e4e4e4"/>
<g fill="#3a3a3a"><rect x="1031" y="149.2" width="2.6" height="2.6"/><rect x="1036.2" y="149.2" width="2.6" height="2.6"/><rect x="1033.6" y="151.8" width="2.6" height="2.6"/><rect x="1031" y="154.4" width="2.6" height="2.6"/><rect x="1036.2" y="154.4" width="2.6" height="2.6"/></g>
<path d="M1059.6 147 L1053.8 152.8 L1055.8 154.8 Z" fill="#e4e4e4"/><path d="M1053.4 153.2 C1051 153.6 1050.4 156 1049.6 159.2 C1053 159 1055.2 157.8 1056 155.6 Z" fill="#e4e4e4"/>
<g fill="#e2e2e2"><path d="M1070.5 148.8 V157.6 M1066.1 153.2 H1074.9" stroke="#e2e2e2" stroke-width="1.1"/><path d="M1070.5 147 L1072.6 149.6 H1068.4 Z M1070.5 159.4 L1072.6 156.8 H1068.4 Z M1064.3 153.2 L1066.9 151.1 V155.3 Z M1076.7 153.2 L1074.1 151.1 V155.3 Z"/></g>
<path d="M1086.2 148 V156.6 H1094.6 M1083.8 150.2 H1092.4 V158.8" fill="none" stroke="#e2e2e2" stroke-width="1.1"/>
<path d="M1092.6 148.4 L1095.2 146.6 M1093.8 150.6 L1096 150" stroke="#e2e2e2" stroke-width="0.8"/>
<rect x="1103.6" y="152" width="8" height="6.4" rx="0.8" fill="#e2e2e2"/><path d="M1105.4 152 V150.2 A2.2 2.2 0 0 1 1109.8 150.2 V152" fill="none" stroke="#e2e2e2" stroke-width="1.1"/><rect x="1107" y="154" width="1.2" height="2.2" fill="#535353"/>
<!-- eyes -->
<use href="#eye" x="1005.7" y="184.3"/><use href="#eye" x="1005.7" y="211.6"/><use href="#eye" x="1005.7" y="239.4"/>
<rect x="1000.8" y="268.8" width="10" height="10.4" fill="#575757" stroke="#5f5f5f" stroke-width="0.8"/>
<!-- thumb 1: ellipse -->
<rect x="1021.7" y="170.5" width="26.3" height="26.3" fill="url(#chk2)"/>
<g clip-path="url(#th1)"><circle cx="1034.85" cy="183.65" r="13" fill="#d1610c"/></g>
<rect x="1036" y="185" width="12" height="12" fill="#4a4a4a" stroke="#333" stroke-width="0.6"/>
<rect x="1039" y="188" width="6" height="6" fill="none" stroke="#e6e6e6" stroke-width="0.9"/>
<g fill="#e6e6e6"><rect x="1037.8" y="186.8" width="2.2" height="2.2"/><rect x="1044" y="186.8" width="2.2" height="2.2"/><rect x="1037.8" y="193" width="2.2" height="2.2"/><rect x="1044" y="193" width="2.2" height="2.2"/></g>
<!-- group row -->
<path d="M1022.6 210.6 L1025.4 213.4 L1028.2 210.6" stroke="#a8a8a8" stroke-width="1" fill="none"/>
<path d="M1031.4 207.2 H1036 L1037.2 208.6 H1042.8 V215.4 H1031.4 Z" fill="none" stroke="#e0e0e0" stroke-width="1"/>
<path d="M1031.4 210 H1042.8 V215.4 H1031.4 Z" fill="#e0e0e0"/>
<!-- thumb 3: layer 1 -->
<rect x="1020.4" y="224.4" width="29.4" height="29.4" fill="#3c3c3c" stroke="#f4f4f4" stroke-width="0.9"/>
<rect x="1022.4" y="226.4" width="25.4" height="25.4" fill="url(#chk2)"/>
<path d="M1031.4 230.4 C1034 227.6 1040.4 228 1043 231.4 C1045.4 234.6 1046.6 241 1046.4 248.4 L1044.2 246.4 L1043.6 250.2 L1041.4 245.6 C1041.4 241 1040.6 237 1039 234.6 C1036.6 233 1033.4 233.4 1031.8 235.6 Z" fill="#3b3848"/>
<path d="M1032 235.4 C1033.6 233.2 1037.4 233 1039 235 C1040.2 237.6 1039.6 241.4 1037.2 242.6 C1034.6 243.4 1032.4 241.4 1031.8 238.6 Z" fill="#f1ddd6"/>
<path d="M1025.4 232.6 L1029 229.2 L1031 230.6 L1029.4 236.8 L1026.6 238 Z" fill="#f4e4df"/>
<path d="M1024.6 240 C1026.6 237.6 1029.6 237 1031.4 238.6 L1033.6 243.6 L1032.4 250.4 L1029 251.4 L1027 247.8 L1024.4 246.4 Z" fill="#24222b"/>
<path d="M1033.6 243.6 L1036.2 245.4 L1038.8 243.4 L1041.2 246 L1040.4 251.4 H1033 Z" fill="#f6f4f6"/>
<path d="M1035.6 244.8 L1037 244.8 L1037.4 250.8 L1035.4 250.8 Z" fill="#5fb0d6"/>
<path d="M1038.8 243.6 L1041.6 245.6 L1042.6 251.4 H1040 Z" fill="#2b2932"/>
<!-- thumb 4: background -->
<rect x="1021.7" y="260.4" width="26.3" height="26" fill="#fbfbfd"/>
<path d="M1027 263.4 C1029 261.8 1032 262.6 1034.6 262 C1037.6 261.4 1041.4 261.6 1043.4 263.2 C1045.4 264.8 1044.4 267.6 1045.4 270 C1046.4 272.6 1046.8 276 1045.6 278.6 C1044.6 280.8 1045.6 283.4 1043.4 284.6 C1041 285.8 1038.6 284 1035.6 284.6 C1032.6 285.2 1029.6 286 1027.2 284.4 C1025.2 283 1026.4 280.4 1025.2 278 C1024 275.6 1023.2 273.4 1024.4 270.8 C1025.4 268.6 1025 265 1027 263.4 Z" fill="#25244d"/>
<path d="M1027.2 268 C1029.4 266.8 1032.6 267.2 1034 268.6 L1028.4 270.4 Z" fill="#fbfbfd"/>
<path d="M1029.6 268.6 C1030.8 268.2 1032 268.4 1032.6 269 L1030 269.8 Z" fill="#25244d"/>
<g fill="#fbfbfd"><circle cx="1043.6" cy="266.4" r="0.7"/><circle cx="1025.6" cy="281.4" r="0.6"/><circle cx="1044.6" cy="282" r="0.7"/><circle cx="1040" cy="263" r="0.5"/></g>
<!-- lock -->
<rect x="1250.4" y="271.4" width="7.4" height="6" fill="none" stroke="#d8d8d8" stroke-width="1"/><path d="M1252.2 271.4 V269.8 A1.9 1.9 0 0 1 1256 269.8 V271.4" fill="none" stroke="#d8d8d8" stroke-width="1"/><rect x="1253.6" y="273.4" width="1" height="2" fill="#d8d8d8"/>
<!-- bottom icons -->
<g fill="none" stroke="#8c8c8c" stroke-width="1"><rect x="1116.8" y="679.4" width="6" height="4.2" rx="2.1"/><rect x="1121.4" y="679.4" width="6" height="4.2" rx="2.1"/></g>
<rect x="1162.4" y="677.8" width="10" height="7.2" fill="#e0e0e0"/><circle cx="1167.4" cy="681.4" r="2.3" fill="#4a4a4a"/>
<circle cx="1189.4" cy="681.5" r="4.2" fill="none" stroke="#e0e0e0" stroke-width="1"/><path d="M1186.4 684.5 A4.2 4.2 0 0 0 1192.4 678.5 Z" fill="#e0e0e0"/>
<path d="M1207.2 677.6 H1211.2 L1212.4 679 H1217.2 V685.4 H1207.2 Z" fill="#e0e0e0"/>
<rect x="1231" y="677.4" width="8.4" height="8.4" fill="none" stroke="#e0e0e0" stroke-width="1"/><path d="M1235.2 679.6 V683.6 M1233.2 681.6 H1237.2" stroke="#e0e0e0" stroke-width="1"/>
<path d="M1252.6 678.6 H1260.8 M1255.2 678.4 V677.2 H1258.2 V678.4 M1253.6 679.4 L1254.2 686 H1259.2 L1259.8 679.4 M1255.8 680.4 V685 M1257.6 680.4 V685" fill="none" stroke="#e0e0e0" stroke-width="0.95"/>
</svg>
<span class="t" style="left:1122.2px;top:98.6px;font-family:'Liberation Serif',serif;font-size:12px;line-height:13px;font-weight:bold;color:#dcdcdc">T</span>
<span class="t" style="left:1140.5px;top:675.4px;font-family:'Liberation Serif',serif;font-style:italic;font-size:11px;line-height:12px;color:#e0e0e0">fx</span>
<svg width="160" height="52" viewBox="1086 618 160 52" style="left:1086px;top:618px">
<g fill="#c6c6c6" opacity="0.93">
<path d="M1088.9 633.6 L1096.6 628.7 V648.9 L1105.3 653.8 V646 L1113 641.8 V668.2 L1088.9 655 Z"/>
<path d="M1105.3 619.5 L1129.4 633.6 V655 L1121.7 659.2 V638.3 L1113 633.8 L1105.3 638.1 Z"/>
</g>
</svg>
<span class="t" style="left:1139.2px;top:622.4px;font-size:34px;line-height:44px;font-weight:bold;color:#c4c4c4;font-family:'Noto Sans CJK SC',sans-serif;letter-spacing:0.2px">小黑盒</span>
<span class="t" id="t0" style="left:35px;top:8.6px;font-size:10px;line-height:14.0px;height:14.0px;color:#e3e3e3;transform:scaleX(0.9483);transform-origin:0 50%;">文件(<u>F</u>)</span>
<span class="t" id="t1" style="left:76px;top:8.6px;font-size:10px;line-height:14.0px;height:14.0px;color:#e3e3e3;transform:scaleX(0.9323);transform-origin:0 50%;">编辑(<u>E</u>)</span>
<span class="t" id="t2" style="left:116.5px;top:8.6px;font-size:10px;line-height:14.0px;height:14.0px;color:#e3e3e3;transform:scaleX(0.9875);transform-origin:0 50%;">图像(<u>I</u>)</span>
<span class="t" id="t3" style="left:155px;top:8.6px;font-size:10px;line-height:14.0px;height:14.0px;color:#e3e3e3;transform:scaleX(0.9643);transform-origin:0 50%;">图层(<u>L</u>)</span>
<span class="t" id="t4" style="left:196px;top:8.6px;font-size:10px;line-height:14.0px;height:14.0px;color:#e3e3e3;transform:scaleX(0.9622);transform-origin:0 50%;">文字(<u>Y</u>)</span>
<span class="t" id="t5" style="left:237px;top:8.6px;font-size:10px;line-height:14.0px;height:14.0px;color:#e3e3e3;transform:scaleX(0.9622);transform-origin:0 50%;">选择(<u>S</u>)</span>
<span class="t" id="t6" style="left:279px;top:8.6px;font-size:10px;line-height:14.0px;height:14.0px;color:#e3e3e3;transform:scaleX(0.9635);transform-origin:0 50%;">滤镜(<u>T</u>)</span>
<span class="t" id="t7" style="left:320.5px;top:8.6px;font-size:10px;line-height:14.0px;height:14.0px;color:#e3e3e3;transform:scaleX(0.9922);transform-origin:0 50%;">视图(<u>V</u>)</span>
<span class="t" id="t8" style="left:363.5px;top:8.2px;font-size:10px;line-height:14.0px;height:14.0px;color:#e3e3e3;transform:scaleX(1.0025);transform-origin:0 50%;">增效工具</span>
<span class="t" id="t9" style="left:413px;top:8.6px;font-size:10px;line-height:14.0px;height:14.0px;color:#e3e3e3;transform:scaleX(0.9989);transform-origin:0 50%;">窗口(<u>W</u>)</span>
<span class="t" id="t10" style="left:458px;top:8.6px;font-size:10px;line-height:14.0px;height:14.0px;color:#e3e3e3;transform:scaleX(0.9905);transform-origin:0 50%;">帮助(<u>H</u>)</span>
<span class="t" id="t11" style="left:113.7px;top:34.5px;font-size:10px;line-height:14.0px;height:14.0px;color:#e0e0e0;transform:scaleX(1.0378);transform-origin:0 50%;">自动选择:</span>
<span class="t" id="t12" style="left:177.5px;top:35.35px;font-size:9.5px;line-height:13.3px;height:13.3px;color:#dcdcdc;transform:scaleX(1.0044);transform-origin:0 50%;">图层</span>
<span class="t" id="t13" style="left:243px;top:34.5px;font-size:10px;line-height:14.0px;height:14.0px;color:#e0e0e0;transform:scaleX(1.0017);transform-origin:0 50%;">显示变换控件</span>
<span class="t" id="t14" style="left:77.2px;top:61.25px;font-size:10.5px;line-height:14.7px;height:14.7px;color:#a3a3a3;transform:scaleX(0.9211);transform-origin:0 50%;">未标题-1 @ 0.7% (图层 1, RGB/8)</span>
<span class="t" id="t15" style="left:252px;top:61.25px;font-size:10.5px;line-height:14.7px;height:14.7px;color:#e6e6e6;transform:scaleX(0.9126);transform-origin:0 50%;">486.psb @ 45.5% (图层 1, RGB/8) *</span>
<span class="t" id="t16" style="left:71.6px;top:549.8px;font-size:10px;line-height:14.0px;height:14.0px;color:#dedede;transform:scaleX(1.0200);transform-origin:0 50%;">45.45%</span>
<span class="t" id="t17" style="left:115.3px;top:549.8px;font-size:10px;line-height:14.0px;height:14.0px;color:#c9c9c9;transform:scaleX(0.9476);transform-origin:0 50%;">1280 像素 x 1280 像素 (72 ppi)</span>
<span class="t" id="t18" style="left:76.5px;top:570.15px;font-size:9.5px;line-height:13.3px;height:13.3px;color:#ececec;transform:scaleX(1.0030);transform-origin:0 50%;">时间轴</span>
<span class="t" id="t19" style="left:485.3px;top:640.3px;font-size:10px;line-height:14.0px;height:14.0px;color:#e0e0e0;transform:scaleX(1.0186);transform-origin:0 50%;">创建视频时间轴</span>
<span class="t" id="t20" style="left:1001px;top:71.35px;font-size:9.5px;line-height:13.3px;height:13.3px;color:#a8a8a8;transform:scaleX(1.0307);transform-origin:0 50%;">属性</span>
<span class="t" id="t21" style="left:1034.5px;top:71.35px;font-size:9.5px;line-height:13.3px;height:13.3px;color:#a8a8a8;transform:scaleX(1.0044);transform-origin:0 50%;">调整</span>
<span class="t" id="t22" style="left:1067.5px;top:71.35px;font-size:9.5px;line-height:13.3px;height:13.3px;color:#a8a8a8;transform:scaleX(1.0089);transform-origin:0 50%;">库</span>
<span class="t" id="t23" style="left:1098px;top:71.35px;font-size:9.5px;line-height:13.3px;height:13.3px;color:#f2f2f2;font-weight:500;transform:scaleX(1.0307);transform-origin:0 50%;">图层</span>
<span class="t" id="t24" style="left:1130.7px;top:71.35px;font-size:9.5px;line-height:13.3px;height:13.3px;color:#a8a8a8;transform:scaleX(0.9939);transform-origin:0 50%;">路径</span>
<span class="t" id="t25" style="left:1015.5px;top:99.35px;font-size:9.5px;line-height:13.3px;height:13.3px;color:#dcdcdc;transform:scaleX(1.0044);transform-origin:0 50%;">类型</span>
<span class="t" id="t26" style="left:1003px;top:123.65px;font-size:9.5px;line-height:13.3px;height:13.3px;color:#dcdcdc;transform:scaleX(1.0307);transform-origin:0 50%;">正常</span>
<span class="t" id="t27" style="left:1100px;top:122.5px;font-size:10px;line-height:14.0px;height:14.0px;color:#d2d2d2;transform:scaleX(1.0191);transform-origin:0 50%;">不透明度:</span>
<span class="t" id="t28" style="left:1149.5px;top:123.35px;font-size:9.5px;line-height:13.3px;height:13.3px;color:#e0e0e0;transform:scaleX(0.8967);transform-origin:0 50%;">100%</span>
<span class="t" id="t29" style="left:998px;top:146.0px;font-size:10px;line-height:14.0px;height:14.0px;color:#d2d2d2;transform:scaleX(1.0359);transform-origin:0 50%;">锁定:</span>
<span class="t" id="t30" style="left:1120px;top:146.0px;font-size:10px;line-height:14.0px;height:14.0px;color:#d2d2d2;transform:scaleX(1.0140);transform-origin:0 50%;">填充:</span>
<span class="t" id="t31" style="left:1149.5px;top:146.85px;font-size:9.5px;line-height:13.3px;height:13.3px;color:#e0e0e0;transform:scaleX(0.8967);transform-origin:0 50%;">100%</span>
<span class="t" id="t32" style="left:1057px;top:177.35px;font-size:9.5px;line-height:13.3px;height:13.3px;color:#f0f0f0;transform:scaleX(1.0246);transform-origin:0 50%;">椭圆 1</span>
<span class="t" id="t33" style="left:1053.7px;top:205.35px;font-size:9.5px;line-height:13.3px;height:13.3px;color:#e0e0e0;transform:scaleX(1.0667);transform-origin:0 50%;">组 1</span>
<span class="t" id="t34" style="left:1057px;top:232.85px;font-size:9.5px;line-height:13.3px;height:13.3px;color:#f0f0f0;transform:scaleX(1.0246);transform-origin:0 50%;">图层 1</span>
<span class="t" id="t35" style="left:1057px;top:266.85px;font-size:9.5px;line-height:13.3px;height:13.3px;color:#d8d8d8;transform:scaleX(0.9781);transform-origin:0 50%;">背景</span>
</div>
</body>
</html>
